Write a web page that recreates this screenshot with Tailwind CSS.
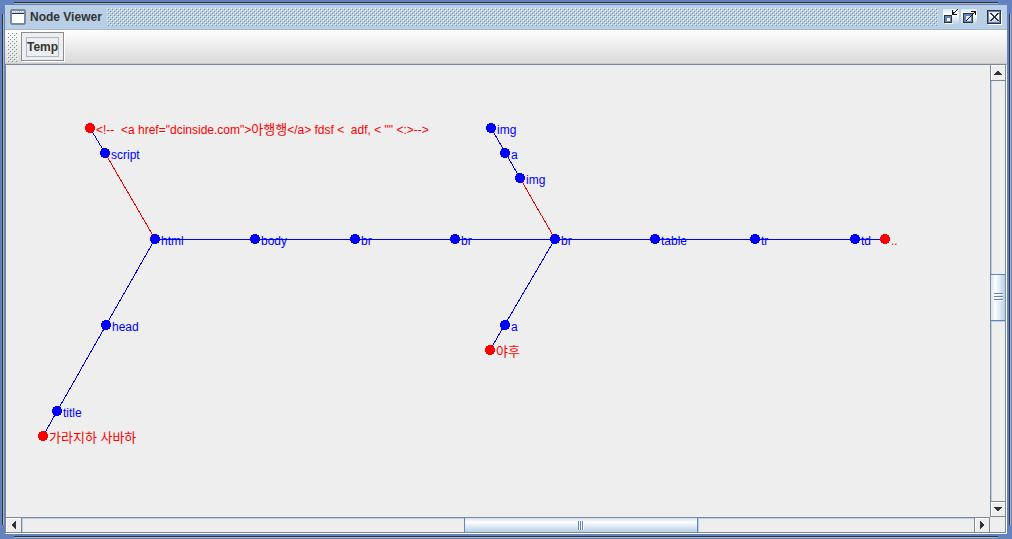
<!DOCTYPE html>
<html lang="en">
<head>
<meta charset="utf-8">
<title>Node Viewer</title>
<script src="https://cdn.jsdelivr.net/npm/@tailwindcss/browser@4"></script>
</head>
<body class="h-screen overflow-hidden bg-[#6382bf] font-['Liberation_Sans','Noto_Sans_CJK_KR',sans-serif] text-xs text-[#333333]">
<div class="relative flex h-full flex-col p-[5px]">
  <!-- Window frame grooves -->
  <div class="absolute inset-x-[14px] top-[2px] h-[2px] border-t border-[#333333] bg-[#a3b8cc]"></div>
  <div class="absolute inset-x-[14px] bottom-[1px] h-[2px] border-t border-[#333333] bg-[#a3b8cc]"></div>
  <div class="absolute inset-y-[14px] left-[2px] w-[2px] border-l border-[#333333] bg-[#a3b8cc]"></div>
  <div class="absolute inset-y-[14px] right-[1px] w-[2px] border-l border-[#333333] bg-[#a3b8cc]"></div>

  <header class="flex h-[25px] shrink-0 items-center border-b border-[#a3b8cc] bg-[#b8cfe5] pr-[5px] pl-[5px]">
    <svg class="size-4 shrink-0" viewBox="0 0 16 16" shape-rendering="crispEdges" aria-hidden="true">
      <path fill="#7a8a99" d="M1 0h14v1h1v14h-1v1H1v-1H0V1h1z"/><path fill="#b8cfe5" d="M2 2h12v3H2z"/><path fill="#fff" d="M2 5h12v9H2zM2 2h1v1H2zm2 0h1v1H4zm2 0h1v1H6zm2 0h1v1H8zm2 0h1v1h-1zm2 0h1v1h-1z"/><path fill="#333" d="M2 4h12v1H2z"/>
    </svg>
    <h1 class="ml-1 shrink-0 font-bold">Node Viewer</h1>
    <svg class="mx-[5px] h-[18px] min-w-0 flex-1" shape-rendering="crispEdges" aria-hidden="true">
      <defs><pattern id="title-bumps" width="4" height="4" patternUnits="userSpaceOnUse"><path fill="#fff" d="M0 0h1v1H0zM2 2h1v1H2z"/><path fill="#6f8aae" d="M1 1h1v1H1zM3 3h1v1H3z"/></pattern></defs>
      <rect width="100%" height="100%" fill="url(#title-bumps)"/>
    </svg>
    <button class="mr-[2px] size-4 shrink-0" aria-label="Minimize">
      <svg class="size-4" viewBox="0 0 16 16" shape-rendering="crispEdges">
        <defs><linearGradient id="btn" x2="0" y2="1"><stop stop-color="#dde8f3"/><stop offset=".35" stop-color="#fff"/><stop offset="1" stop-color="#b8cfe5"/></linearGradient></defs>
        <path fill="url(#btn)" d="M0 0h16v16H0z"/><path fill="#333" d="M1 6h8v8H1z"/><path fill="#6382bf" d="M2 7h6v6H2z"/><path fill="#fff" d="M4 9h3v3H4zM2 14h8v1H2z"/>
        <path fill="#111" d="M9 1h1v4h4v1H9zM10 3h1v2h-1zM11 3h1v1h-1zM12 2h1v1h-1zM13 1h1v1h-1zM14 0h1v1h-1z"/>
      </svg>
    </button>
    <button class="mr-[10px] size-4 shrink-0" aria-label="Maximize">
      <svg class="size-4" viewBox="0 0 16 16" shape-rendering="crispEdges">
        <path fill="url(#btn)" d="M0 0h16v16H0z"/><path fill="#333" d="M2 4h10v10H2z"/><path fill="#6382bf" d="M3 5h8v8H3z"/><path fill="#dfeaf4" d="M5 7h5v5H5z"/>
        <path fill="#111" d="M10 2h5v4h-1V3h-4zM13 3h1v1h-1zM12 4h1v1h-1zM11 5h1v1h-1zM10 6h1v1h-1zM9 7h1v1H9zM8 8h1v1H8zM7 9h1v1H7zM6 10h1v1H6zM5 11h1v1H5z"/>
      </svg>
    </button>
    <button class="h-4 w-[15px] shrink-0" aria-label="Close">
      <svg class="h-4 w-[15px]" viewBox="0 0 15 16" shape-rendering="crispEdges">
        <path fill="#333" d="M0 1h14v14H0z"/><path fill="#6382bf" d="M1 2h12v12H1z"/><path fill="url(#btn)" d="M2 3h10v10H2z"/><path fill="#fff" d="M14 2h1v14H1v-1h13z"/>
        <path fill="#333" d="M3 4h2v1h1v1h1v1h1V6h1V5h1V4h2v1h-1v1h-1v1H9v2h1v1h1v1h1v1h-2v-1H9v-1H8V9H7v1H6v1H5v1H3v-1h1v-1h1V9h1V7H5V6H4V5H3z"/>
      </svg>
    </button>
  </header>

  <div role="toolbar" aria-label="Tools" class="flex h-[34px] shrink-0 items-center border-b border-[#cccccc] bg-linear-to-b from-white to-[#dadada] pl-[2px]">
    <svg class="h-[30px] w-[11px]" shape-rendering="crispEdges" aria-hidden="true">
      <defs><pattern id="grip" width="4" height="4" patternUnits="userSpaceOnUse"><path fill="#fff" d="M0 0h1v1H0zM2 2h1v1H2z"/><path fill="#7a8a99" d="M1 1h1v1H1zM3 3h1v1H3z"/></pattern></defs>
      <rect width="100%" height="100%" fill="url(#grip)"/>
    </svg>
    <button class="ml-[3px] flex h-[29px] items-center border border-[#8c8c8c] bg-[#eeeeee] px-[4px] font-bold shadow-[1px_1px_0_#fff]"><span class="border border-[#a3b8cc] leading-[18px]">Temp</span></button>
  </div>

  <div class="grid min-h-0 flex-1 grid-cols-[1fr_16px] grid-rows-[1fr_16px] border border-r-white border-b-white border-[#7a8a99] bg-[#eeeeee]">
    <svg class="size-full min-h-0 overflow-hidden" role="img" aria-label="Node tree">
      <rect x="149" y="174" width="730" height="1" fill="#0000ff"/>
      <g stroke-width="1" shape-rendering="crispEdges" stroke="#0000ff">
        <path d="M84 63L99 88M149 174L37 371M485 63L514 113M549 174L484 285"/>
        <path stroke="#ff0000" d="M99 88L149 174M514 113L549 174"/>
      </g>
      <g fill="#0000ff">
        <g shape-rendering="crispEdges">
          <circle cx="99" cy="88" r="5"/><circle cx="149" cy="174" r="5"/><circle cx="249" cy="174" r="5"/><circle cx="349" cy="174" r="5"/><circle cx="449" cy="174" r="5"/><circle cx="549" cy="174" r="5"/><circle cx="649" cy="174" r="5"/><circle cx="749" cy="174" r="5"/><circle cx="849" cy="174" r="5"/>
          <circle cx="100" cy="260" r="5"/><circle cx="51" cy="346" r="5"/><circle cx="485" cy="63" r="5"/><circle cx="499" cy="88" r="5"/><circle cx="514" cy="113" r="5"/><circle cx="499" cy="260" r="5"/>
        </g>
        <text x="105" y="94">script</text><text x="155" y="180">html</text><text x="255" y="180">body</text><text x="355" y="180">br</text><text x="455" y="180">br</text><text x="555" y="180">br</text><text x="655" y="180">table</text><text x="755" y="180">tr</text><text x="855" y="180">td</text>
        <text x="106" y="266">head</text><text x="57" y="352">title</text><text x="491" y="69">img</text><text x="505" y="94">a</text><text x="520" y="119">img</text><text x="505" y="266">a</text>
      </g>
      <g fill="#ff0000">
        <g shape-rendering="crispEdges"><circle cx="84" cy="63" r="5"/><circle cx="879" cy="174" r="5"/><circle cx="37" cy="371" r="5"/><circle cx="484" cy="285" r="5"/></g>
        <text class="whitespace-pre" x="90" y="69">&lt;!--  &lt;a href="dcinside.com"&gt;<tspan class="text-[13px]">아행행</tspan>&lt;/a&gt; fdsf &lt;  adf, &lt; "" &lt;:&gt;--&gt;</text>
        <text x="885" y="180">..</text><text class="text-[13px]" x="43" y="377">가라지하 사바하</text><text class="text-[13px]" x="490" y="291">야후</text>
      </g>
    </svg>

    <div class="flex min-h-0 flex-col border-x border-[#7a8a99]">
      <button class="flex h-4 shrink-0 items-center justify-center border-b border-[#7a8a99] bg-[#eeeeee] inset-shadow-[1px_1px_0_#fff]" aria-label="Scroll up"><svg class="h-1 w-2" viewBox="0 0 8 4" shape-rendering="crispEdges"><path fill="#333" d="M3 0h2v1h1v1h1v1h1v1H0V3h1V2h1V1h1z"/></svg></button>
      <div class="flex-[194_1_0%] border-l border-[#b8cfe5]"></div>
      <div class="flex flex-[45_1_0%] flex-col items-center justify-center gap-px border-y border-[#6382bf] bg-linear-to-r from-[#d3e2ef] via-white via-30% to-[#b8cfe5]">
        <div class="h-[2px] w-[9px] border-t border-[#6382bf] bg-white"></div><div class="h-[2px] w-[9px] border-t border-[#6382bf] bg-white"></div><div class="h-[2px] w-[9px] border-t border-[#6382bf] bg-white"></div>
      </div>
      <div class="flex-[180_1_0%] border-t border-l border-[#b8cfe5]"></div>
      <button class="flex h-4 shrink-0 items-center justify-center border-y border-[#7a8a99] bg-[#eeeeee] inset-shadow-[1px_1px_0_#fff]" aria-label="Scroll down"><svg class="h-1 w-2" viewBox="0 0 8 4" shape-rendering="crispEdges"><path fill="#333" d="M0 0h8v1H7v1H6v1H5v1H3V3H2V2H1V1H0z"/></svg></button>
    </div>

    <div class="flex min-w-0 border-y border-[#7a8a99]">
      <button class="flex w-4 shrink-0 items-center justify-center border-r border-[#7a8a99] bg-[#eeeeee] inset-shadow-[1px_1px_0_#fff]" aria-label="Scroll left"><svg class="h-2 w-1" viewBox="0 0 4 8" shape-rendering="crispEdges"><path fill="#333" d="M4 0v8H3V7H2V6H1V5H0V3h1V2h1V1h1V0z"/></svg></button>
      <div class="flex-[442_1_0%] border-t border-l border-[#b8cfe5]"></div>
      <div class="flex flex-[232_1_0%] items-center justify-center gap-px border-x border-[#6382bf] bg-linear-to-b from-[#d3e2ef] via-white via-30% to-[#b8cfe5]">
        <div class="h-[9px] w-px bg-[#6382bf] shadow-[1px_0_0_#fff]"></div><div class="h-[9px] w-px bg-[#6382bf] shadow-[1px_0_0_#fff]"></div><div class="h-[9px] w-px bg-[#6382bf] shadow-[1px_0_0_#fff]"></div>
      </div>
      <div class="flex-[276_1_0%] border-t border-l border-[#b8cfe5]"></div>
      <button class="flex w-4 shrink-0 items-center justify-center border-x border-[#7a8a99] bg-[#eeeeee] inset-shadow-[1px_1px_0_#fff]" aria-label="Scroll right"><svg class="h-2 w-1" viewBox="0 0 4 8" shape-rendering="crispEdges"><path fill="#333" d="M0 0v8h1V7h1V6h1V5h1V3H3V2H2V1H1V0z"/></svg></button>
    </div>
    <div class="border-r border-b border-[#7a8a99]"></div>
  </div>
</div>
</body>
</html>
